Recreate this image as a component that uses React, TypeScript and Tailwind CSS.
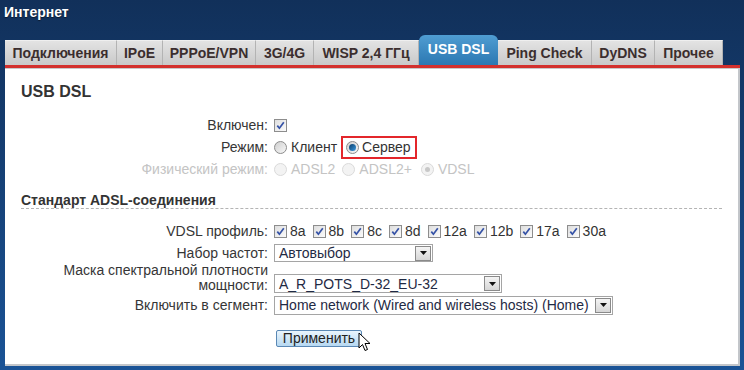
import React from 'react';

const TABS = [
  { label: 'Подключения', w: 'w-[112px]' },
  { label: 'IPoE', w: 'w-[46px]' },
  { label: 'PPPoE/VPN', w: 'w-[93px]' },
  { label: '3G/4G', w: 'w-[58px]' },
  { label: 'WISP 2,4 ГГц', w: 'w-[105px]' },
  { label: 'USB DSL', w: 'w-[79px]', active: true },
  { label: 'Ping Check', w: 'w-[94px]' },
  { label: 'DyDNS', w: 'w-[63px]' },
  { label: 'Прочее', w: 'w-[68px]' },
];

const PROFILES = ['8a', '8b', '8c', '8d', '12a', '12b', '17a', '30a'];

function Check() {
  return (
    <span className="w-[13px] h-[13px] shrink-0 border border-[#8d8d8d] bg-gradient-to-br from-[#dedede] to-[#fbfbfb] flex items-center justify-center">
      <svg width="9" height="9" viewBox="0 0 9 9" fill="none">
        <path d="M1.3 4.6L3.4 7.2L7.8 1.2" stroke="#3552a6" strokeWidth="1.7" />
      </svg>
    </span>
  );
}

function Radio({ checked, disabled }: { checked?: boolean; disabled?: boolean }) {
  return (
    <span
      className={
        disabled
          ? 'w-[13px] h-[13px] shrink-0 rounded-full border border-[#dadada] bg-[#f3f3f3] flex items-center justify-center'
          : 'w-[13px] h-[13px] shrink-0 rounded-full border border-[#8c8c8c] bg-gradient-to-br from-[#cfcfcf] to-[#f8f8f8] flex items-center justify-center'
      }
    >
      {checked && (
        <span
          className={
            disabled
              ? 'w-[5px] h-[5px] rounded-full bg-[#c8c8c8]'
              : 'w-[7px] h-[7px] rounded-full bg-gradient-to-br from-[#0d3f6c] to-[#3a9ae0]'
          }
        />
      )}
    </span>
  );
}

function Select({ value, w, h }: { value: string; w: string; h: string }) {
  return (
    <div className={`${w} ${h} border border-[#a5a5a5] bg-white flex items-center`}>
      <span className="flex-1 pl-[4px] text-[14px] text-[#1f2a44] leading-[16px] whitespace-nowrap overflow-hidden">{value}</span>
      <span className="w-[16px] h-[15px] mr-[1px] border border-[#8a8a8a] bg-gradient-to-b from-[#f4f4f4] to-[#d6d6d6] flex items-center justify-center">
        <svg width="7" height="4" viewBox="0 0 7 4">
          <path d="M0 0H7L3.5 4Z" fill="#111" />
        </svg>
      </span>
    </div>
  );
}

function Row({ label, children, h = 'h-[22px]', disabled }: { label: React.ReactNode; children: React.ReactNode; h?: string; disabled?: boolean }) {
  return (
    <div className={`flex items-center ${h}`}>
      <div className={`w-[249px] text-right pr-[2px] ${disabled ? 'text-[#c4c4c4]' : 'text-[#363636]'}`}>{label}</div>
      <div className="pl-[4px] flex items-center">{children}</div>
    </div>
  );
}

export default function App() {
  return (
    <div className="w-[744px] h-[370px] overflow-hidden bg-gradient-to-b from-[#11305a] to-[#1a5396] font-['Liberation_Sans',Arial,sans-serif] text-[14px]">
      <div className="h-[35px] pl-[4px] pt-[2px] text-[14px] font-bold text-white [text-shadow:0_1px_1px_rgba(0,0,0,0.5)]">Интернет</div>

      {/* Tabs */}
      <div className="ml-[5px] h-[30px] flex items-end">
        {TABS.map((t) =>
          t.active ? (
            <div
              key={t.label}
              className={`${t.w} h-[30px] rounded-t-[6px] bg-gradient-to-b from-[#4f9dd2] to-[#2b78b2] text-white font-bold text-[14px] flex items-center justify-center pb-[2px]`}
            >
              {t.label}
            </div>
          ) : (
            <div
              key={t.label}
              className={`${t.w} h-[25px] border-r border-[#b3b3b3] border-t border-t-[#efefef] bg-gradient-to-b from-[#e3e3e3] to-[#c9c9c9] text-[#3b2e2e] font-bold text-[14px] flex items-center justify-center`}
            >
              {t.label}
            </div>
          )
        )}
      </div>
      <div className="ml-[5px] w-[735px] h-[3px] bg-[#d3302d]" />

      {/* Panel */}
      <div className="ml-[5px] w-[735px] h-[298px] bg-white border-t border-t-[#c8c8c8] border-r-2 border-b-2 border-[#c3c6ca] pl-[16px] pr-[16px] pt-[14px]">
        <h2 className="text-[16px] font-bold text-[#333] leading-[18px]">USB DSL</h2>

        <div className="mt-[13px]">
          <Row label="Включен:">
            <Check />
          </Row>
          <Row label="Режим:">
            <Radio />
            <span className="ml-[4px] text-[#333]">Клиент</span>
            <span className="ml-[4px] h-[23px] border-2 border-[#e3262b] pl-[3px] pr-[4px] flex items-center">
              <Radio checked />
              <span className="ml-[3px] text-[#333]">Сервер</span>
            </span>
          </Row>
          <Row label="Физический режим:" disabled>
            <Radio disabled />
            <span className="ml-[4px] text-[#c4c4c4]">ADSL2</span>
            <span className="ml-[7px]" />
            <Radio disabled />
            <span className="ml-[4px] text-[#c4c4c4]">ADSL2+</span>
            <span className="ml-[9px]" />
            <Radio disabled checked />
            <span className="ml-[4px] text-[#c4c4c4]">VDSL</span>
          </Row>
        </div>

        <h3 className="mt-[12px] border-b border-dashed border-[#b4b4b4] text-[14px] font-bold text-[#333] leading-[16px]">
          Стандарт ADSL-соединения
        </h3>

        <div className="mt-[11px]">
          <Row label="VDSL профиль:">
            <div className="flex items-center gap-[7px]">
              {PROFILES.map((p) => (
                <span key={p} className="flex items-center gap-[3px] text-[#333]">
                  <Check />
                  {p}
                </span>
              ))}
            </div>
          </Row>
          <Row label="Набор частот:">
            <Select value="Автовыбор" w="w-[159px]" h="h-[18px]" />
          </Row>
          <div className="flex items-end h-[30px] pb-[1px]">
            <div className="w-[249px] text-right pr-[2px] text-[#363636] leading-[15px]">
              Маска спектральной плотности
              <br />
              мощности:
            </div>
            <div className="pl-[4px]">
              <Select value="A_R_POTS_D-32_EU-32" w="w-[228px]" h="h-[19px]" />
            </div>
          </div>
          <Row label="Включить в сегмент:">
            <Select value="Home network (Wired and wireless hosts) (Home)" w="w-[339px]" h="h-[19px]" />
          </Row>
        </div>

        <div className="mt-[12px] pl-[255px]">
          <div className="relative inline-block">
            <button className="w-[86px] h-[17px] rounded-[2px] border border-[#5a88b5] bg-gradient-to-b from-[#eaf5fd] to-[#b6d8f1] text-[14px] text-[#222] leading-none">
              Применить
            </button>
            <svg className="absolute left-[82px] top-[4px]" width="13" height="20" viewBox="0 0 13 20">
              <path d="M1 1V16L4.5 12.5L7 18.5L9.5 17.5L7 11.5H12Z" fill="#fff" stroke="#000" strokeWidth="1" strokeLinejoin="round" />
            </svg>
          </div>
        </div>
      </div>
    </div>
  );
}
